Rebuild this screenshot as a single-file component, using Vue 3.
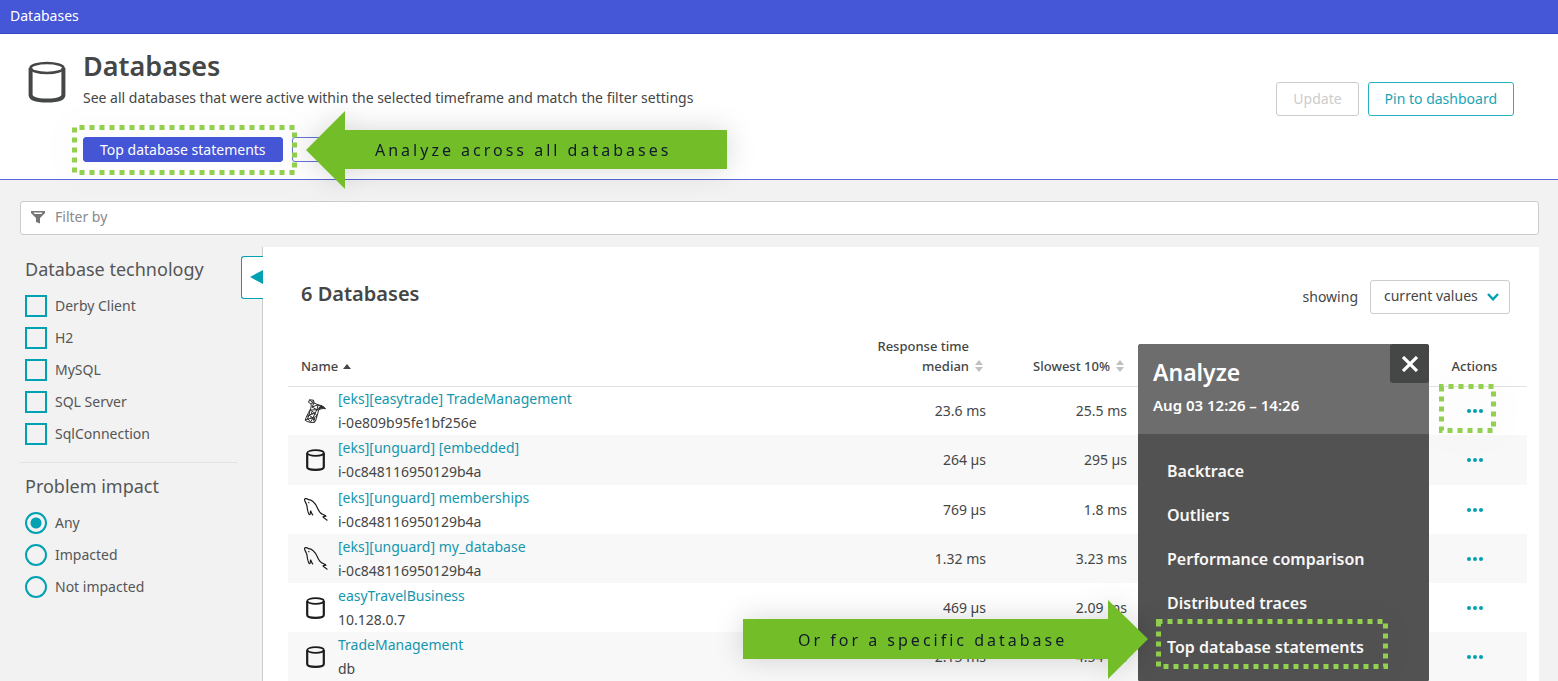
<script setup>
import { ref } from 'vue'

const technologies = ['Derby Client', 'H2', 'MySQL', 'SQL Server', 'SqlConnection']
const impacts = ['Any', 'Impacted', 'Not impacted']
const impact = ref('Any')
const rows = [
  { icon: 'sqlserver', name: '[eks][easytrade] TradeManagement', host: 'i-0e809b95fe1bf256e', median: '23.6 ms', slowest: '25.5 ms', marked: true },
  { icon: 'db', name: '[eks][unguard] [embedded]', host: 'i-0c848116950129b4a', median: '264 µs', slowest: '295 µs' },
  { icon: 'mysql', name: '[eks][unguard] memberships', host: 'i-0c848116950129b4a', median: '769 µs', slowest: '1.8 ms' },
  { icon: 'mysql', name: '[eks][unguard] my_database', host: 'i-0c848116950129b4a', median: '1.32 ms', slowest: '3.23 ms' },
  { icon: 'db', name: 'easyTravelBusiness', host: '10.128.0.7', median: '469 µs', slowest: '2.09 ms' },
  { icon: 'db', name: 'TradeManagement', host: 'db', median: '2.15 ms', slowest: '4.54 ms' },
]
const analyses = ['Backtrace', 'Outliers', 'Performance comparison', 'Distributed traces', 'Top database statements']
</script>

<template>
  <div class="page">
    <nav class="topbar"><a href="#">Databases</a></nav>

    <header class="header">
      <svg class="header-icon" width="38" height="42" viewBox="0 0 38 42" fill="none" stroke="#454646">
        <ellipse cx="19" cy="7" rx="16.5" ry="5" stroke-width="2.6" />
        <path d="M2.6 7v27c0 3 5 5.6 16.4 5.6S35.4 37 35.4 34V7" stroke-width="4" />
      </svg>
      <div class="header-text">
        <h1>Databases</h1>
        <p>See all databases that were active within the selected timeframe and match the filter settings</p>
        <div class="tabs">
          <div class="marked-tab">
            <button class="tab active">Top database statements</button>
            <svg class="outline outline-tab" width="225" height="50" viewBox="0 0 225 50">
              <path d="M2.5 2.5V47.5H222.5V2.5Z" />
            </svg>
          </div>
          <button class="tab" aria-label="More statements"></button>
          <div class="arrow arrow-left">
            <svg width="421" height="78" viewBox="0 0 421 78"><path d="M0 39L39 0V19H421V58H39V78Z" /></svg>
            <span>Analyze across all databases</span>
          </div>
        </div>
      </div>
      <div class="header-actions">
        <button class="btn" disabled>Update</button>
        <button class="btn primary">Pin to dashboard</button>
      </div>
    </header>

    <main>
      <label class="filter">
        <svg width="14" height="14" viewBox="0 0 14 14">
          <path fill="#747575" fill-rule="evenodd" d="M0 1h14v2L9 8v5.500L5 12V8L0 3zM2.500 2.500h9L10.500 4h-7z" />
        </svg>
        <input type="text" placeholder="Filter by" aria-label="Filter by">
      </label>

      <div class="columns">
        <aside class="sidebar">
          <fieldset>
            <legend>Database technology</legend>
            <label v-for="t in technologies" :key="t" class="option">
              <input type="checkbox"><span>{{ t }}</span>
            </label>
          </fieldset>
          <hr>
          <fieldset>
            <legend>Problem impact</legend>
            <label v-for="i in impacts" :key="i" class="option">
              <input v-model="impact" type="radio" name="impact" :value="i"><span>{{ i }}</span>
            </label>
          </fieldset>
          <button class="collapse" aria-label="Collapse filters">
            <svg width="13" height="14" viewBox="0 0 13 14"><path fill="#00a1b2" d="M0 7L13 0v14z" /></svg>
          </button>
        </aside>

        <section class="panel">
          <div class="panel-head">
            <h2>6 Databases</h2>
            <label for="mode">showing</label>
            <div class="select">
              <select id="mode"><option>current values</option></select>
              <svg width="12" height="8" viewBox="0 0 12 8" fill="none" stroke="#00a1b2" stroke-width="2.400"><path d="M1 1l5 5.300L11 1" /></svg>
            </div>
          </div>

          <div class="table-area">
            <table>
              <colgroup><col><col class="c-median"><col class="c-slow"><col class="c-actions"></colgroup>
              <thead>
                <tr>
                  <th class="name">Name
                    <svg width="8" height="5" viewBox="0 0 8 5"><path fill="#454646" d="M0 5L4 0l4 5z" /></svg>
                  </th>
                  <th class="num"><div class="sortable"><span>Response time<br>median</span>
                    <svg width="8" height="12" viewBox="0 0 8 12"><path fill="#c0c0c0" d="M0 5L4 0l4 5zM0 7h8l-4 5z" /></svg></div>
                  </th>
                  <th class="num slow"><div class="sortable"><span>Slowest 10%</span>
                    <svg width="8" height="12" viewBox="0 0 8 12"><path fill="#c0c0c0" d="M0 5L4 0l4 5zM0 7h8l-4 5z" /></svg></div>
                  </th>
                  <th class="act">Actions</th>
                </tr>
              </thead>
              <tbody>
                <tr v-for="r in rows" :key="r.name">
                  <td>
                    <div class="entity">
                      <svg v-if="r.icon === 'db'" width="24" height="24" viewBox="0 0 24 24" fill="none" stroke="#1c1c1c">
                        <ellipse cx="11.500" cy="5" rx="8.300" ry="2.800" stroke-width="1.700" />
                        <path d="M3.200 5v14c0 1.600 3 2.800 8.300 2.800s8.300-1.200 8.300-2.800V5" stroke-width="2.200" />
                      </svg>
                      <svg v-else-if="r.icon === 'mysql'" width="24" height="24" viewBox="0 0 24 24" fill="none" stroke="#1c1c1c" stroke-width="1.200" stroke-linejoin="round">
                        <path d="M4 13.500C3 11 3.500 9 2.500 6.500 1.800 4.500.2 2.500.6 1.300 1 .3 3 .6 4.500 1.700 8.500 1.900 11 5 13.200 9.500 14.500 12.500 15.600 14.900 17.800 15.900c1.600.7 3.700 1.400 4.200 2.300-1.600.1-2.500.2-3 .8.700 1 3 1.900 4.400 3.500" />
                        <path d="M4 13.500c.3 1.800 1 3.200 1.800 3.200.7-.7.300-2.700.9-3.700.700 1.400 1 3 2.300 4.200" />
                        <path d="M4.400 4.200l.9.900" />
                      </svg>
                      <svg v-else width="24" height="24" viewBox="0 0 24 24" fill="none" stroke="#2b2b2b" stroke-width="1" stroke-linejoin="round">
                        <path d="M5.500.8l4 .4.5 2.700 4 1.900c3.500.5 6.500 2 7.500 3.900-2.500-.5-5 .1-6.800 1.200L13 17c-.8 3.500-1.400 5-2.400 6.300C7 24 3.500 23 1.200 21.300c1-3.500 2.800-6.800 4.800-10.300C7.300 8.600 7.700 6 6.600 4.500L4.500 3.300z" />
                        <path d="M5.500.8l3 2.700 1-2.300M6.600 4.500L10 3.900 8 8l6-2.200-1 5 4-4.100-1.900 4.200M8 8l5 2.800L6 11l5 3.200 2-3.400M14 5.800l7 3.900-4-3-2 4.200-2-.1M6 11l-1 5 6-1.800L9 19l4-2-2-2.800M5 16l4 3-5.500 1L5 16M1.200 21.300L4 20l2.500 3L9 19l1.600 4.300M3 17.500l2-1.500" />
                        <path d="M17 7.500l2 .8M16 9l2.500-.2M7 13.500l1.500 1.500M6.500 18l1 .5M10 21l1-2" stroke-width="1.300" />
                      </svg>
                      <div class="entity-text"><a href="#">{{ r.name }}</a><span>{{ r.host }}</span></div>
                    </div>
                  </td>
                  <td class="num">{{ r.median }}</td>
                  <td class="num slow">{{ r.slowest }}</td>
                  <td class="act">
                    <button class="dots" :aria-label="'Actions for ' + r.name">
                      <svg width="16" height="4" viewBox="0 0 16 4" fill="#00a1b2"><circle cx="2" cy="2" r="2" /><circle cx="8" cy="2" r="2" /><circle cx="14" cy="2" r="2" /></svg>
                      <svg v-if="r.marked" class="outline outline-dots" width="57" height="49" viewBox="0 0 57 49">
                        <path d="M2.5 2.5V46.500H54.500V2.500Z" />
                      </svg>
                    </button>
                  </td>
                </tr>
              </tbody>
            </table>

            <div class="menu">
              <div class="menu-head">
                <h3>Analyze</h3>
                <p>Aug 03 12:26 – 14:26</p>
                <button class="close" aria-label="Close">
                  <svg width="16" height="16" viewBox="0 0 16 16" stroke="#fff" stroke-width="3.200"><path d="M1 1l14 14M15 1L1 15" /></svg>
                </button>
              </div>
              <ul>
                <li v-for="a in analyses" :key="a"><a href="#">{{ a }}</a></li>
              </ul>
              <svg class="outline outline-menu" width="232" height="50" viewBox="0 0 232 50">
                <path d="M2.500 2.500V47.500H229.500V2.500Z" />
              </svg>
              <div class="arrow arrow-right">
                <svg width="405" height="79" viewBox="0 0 405 79"><path d="M405 39L365 0V19H0V59H365V79Z" /></svg>
                <span>Or for a specific database</span>
              </div>
            </div>
          </div>
        </section>
      </div>
    </main>
  </div>
</template>

<style>
body { background: #f2f2f2; overflow: hidden; }
</style>

<style scoped>
.page { font: 14px/20px "Noto Sans", "Open Sans", sans-serif; color: #454646; }
.page *, .page *::before { box-sizing: border-box; }
button, input, select { font: inherit; color: inherit; margin: 0; }
button { cursor: pointer; }
a { color: #1496ad; text-decoration: none; }
h1, h2, h3, p, ul { margin: 0; padding: 0; font-weight: 600; }
svg { display: block; flex: none; }

.topbar { height: 34px; padding: 6px 10px; background: #4556d7; border-bottom: 1px solid #3848c4; }
.topbar a { color: #fff; }

.header { display: flex; align-items: flex-start; height: 146px; padding: 0 44px 0 28px; background: #fff; border-bottom: 1px solid #5766d9; }
.header-icon { margin-top: 27px; }
.header-text { flex: 1; padding: 14px 0 0 17px; }
h1 { font-size: 27px; line-height: 36px; }
.header-text p { margin-top: 4px; font-weight: 400; }
.tabs { position: relative; display: flex; gap: 9px; margin-top: 29px; }
.marked-tab { position: relative; }
.tab { height: 25px; width: 200px; padding: 0; background: #fff; border: 1px solid #6473dc; border-radius: 3px; white-space: nowrap; line-height: 20px; }
.tab.active { width: auto; padding: 0 16px; background: #4556d7; border-color: #4556d7; color: #fff; }
.tabs > .tab { width: 100px; }
.header-actions { display: flex; gap: 9px; margin-top: 48px; }
.btn { height: 34px; padding: 0 16px; background: #fff; border: 1px solid #ccc; border-radius: 3px; }
.btn:disabled { color: #ccc; }
.btn.primary { border-color: #2ab1bf; color: #1aa5b6; }

.outline { position: absolute; pointer-events: none; fill: none; stroke: #92d050; stroke-width: 5; stroke-dasharray: 5; filter: drop-shadow(0 0 14px rgba(0, 0, 0, 0.1)); overflow: visible; }
.outline-tab { left: -11px; top: -12px; }
.outline-dots { left: -20px; top: -11px; }
.outline-menu { left: 18px; top: 275px; }
.arrow { position: absolute; filter: drop-shadow(0 0 14px rgba(0, 0, 0, 0.16)); }
.arrow path { fill: #73be28; }
.arrow span { position: absolute; inset: 0; display: flex; align-items: center; color: #101a2c; font-size: 16px; letter-spacing: 3px; white-space: pre; }
.arrow-left { left: 223px; top: -26px; }
.arrow-left span { padding-left: 69px; }
.arrow-right { right: 281px; top: 256px; z-index: 2; }
.arrow-right span { padding-left: 55px; }

main { padding: 21px 19px 0 20px; }
.filter { display: flex; align-items: center; gap: 10px; height: 34px; padding: 0 10px 2px; background: #fff; border: 1px solid #ccc; border-radius: 3px; }
.filter input { flex: 1; border: 0; outline: 0; padding: 0; background: none; }
.filter input::placeholder { color: #898989; opacity: 1; }

.columns { display: flex; margin-top: 12px; }
.sidebar { position: relative; flex: none; width: 243px; padding: 9px 25px 0 0; border-right: 1px solid #ccc; color: #555656; }
fieldset { display: block; margin: 0; padding: 0 0 0 5px; border: 0; min-width: 0; }
legend { padding: 0; margin-bottom: 8px; font-size: 18px; line-height: 26px; }
.option { display: flex; align-items: center; gap: 8px; height: 32px; }
.option input { appearance: none; width: 22px; height: 22px; border: 2px solid #00a1b2; }
.option input[type="radio"] { border-radius: 50%; }
.option input[type="radio"]:checked { background: radial-gradient(circle, #00a1b2 5px, transparent 6px); }
hr { margin: 12px 0 10px; border: 0; border-top: 1px solid #e2e2e2; }
.collapse { position: absolute; right: -1px; top: 9px; width: 22px; height: 43px; display: flex; align-items: center; padding: 0 0 2px 8px; background: #fff; border: 1px solid #00a1b2; border-right: 0; border-radius: 3px 0 0 3px; }

.panel { flex: 1; min-width: 0; padding: 33px 12px 0 25px; background: #fff; }
.panel-head { display: flex; align-items: center; height: 34px; padding: 0 17px 0 13px; }
h2 { flex: 1; margin-top: -6px; font-size: 20px; line-height: 28px; }
.select { position: relative; margin-left: 12px; }
select { appearance: none; height: 34px; width: 140px; padding: 0 13px 2px; background: #fff; border: 1px solid #ccc; border-radius: 3px; }
.select svg { position: absolute; right: 11px; top: 13px; pointer-events: none; }

.table-area { position: relative; margin-top: 12px; }
table { width: 100%; border-collapse: collapse; table-layout: fixed; }
.c-median { width: 140px; }
.c-slow { width: 441px; }
.c-actions { width: 88px; }
th { height: 60px; padding: 0 12px 10px; vertical-align: bottom; border-bottom: 1px solid #e2e2e2; text-align: left; font-size: 13px; font-weight: 500; white-space: nowrap; }
th.name { padding-left: 13px; }
th.name svg { display: inline; margin: 0 0 2px 1px; }
.sortable { display: flex; justify-content: flex-end; align-items: flex-end; gap: 6px; padding-right: 3px; text-align: right; }
.sortable svg { margin-bottom: 4px; }
td { height: 49px; padding: 0; vertical-align: middle; }
tbody tr:nth-child(4n + 2) td { height: 50px; }
tbody tr:nth-child(even) { background: #f8f8f8; }
.num { padding-right: 12px; text-align: right; }
.num.slow { padding-right: 312px; }
.act { padding-left: 0; padding-right: 17px; text-align: center; }
.entity { display: flex; align-items: center; gap: 10px; padding-left: 16px; }
.entity-text { display: flex; flex-direction: column; line-height: 24px; }
.dots { position: relative; display: inline-block; padding: 14px 8px; border: 0; background: none; }

.menu { position: absolute; right: 98px; top: 18px; width: 291px; padding-bottom: 13px; background: #525252; border-radius: 3px; color: #fff; }
.menu-head { height: 90px; padding: 12px 15px; background: #6d6d6d; border-radius: 3px 3px 0 0; }
h3 { font-size: 23px; line-height: 32px; }
.menu-head p { margin-top: 7px; font-size: 15px; line-height: 20px; }
.close { position: absolute; right: 0; top: 0; width: 39px; height: 39px; display: grid; place-items: center; padding: 0; border: 0; border-radius: 3px; background: #454646; }
.menu ul { padding: 15px 0 0 29px; list-style: none; }
.menu li { height: 44px; display: flex; align-items: center; }
.menu li a { color: #f8f8f8; font-size: 16px; font-weight: 600; }
</style>
